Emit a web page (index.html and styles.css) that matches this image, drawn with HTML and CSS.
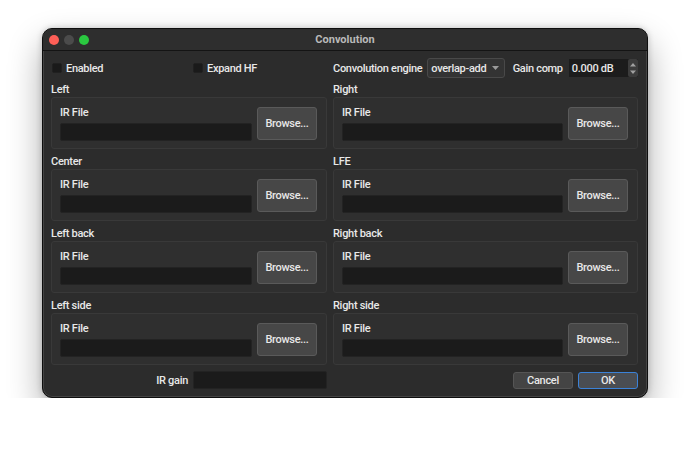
FILE: index.html
```html
<!DOCTYPE html>
<html>
<head>
<meta charset="utf-8">
<link rel="stylesheet" href="styles.css">
</head>
<body>
<div class="window">
  <div class="titlebar">
    <div class="lights">
      <span class="light red"></span>
      <span class="light gray"></span>
      <span class="light green"></span>
    </div>
    <div class="title">Convolution</div>
  </div>
  <div class="content">
    <div class="top-left">
      <label class="check enabled"><span class="box"></span>Enabled</label>
      <label class="check"><span class="box"></span>Expand HF</label>
    </div>
    <div class="top-right">
      <span class="lbl">Convolution engine</span>
      <div class="combo">
        <span>overlap-add</span>
        <svg class="caret" width="7" height="4" viewBox="0 0 7 4"><path d="M0 0 H7 L3.5 4 Z" fill="#9a9a9a"/></svg>
      </div>
      <span class="lbl gain">Gain comp</span>
      <div class="spin">
        <span class="spin-val">0.000 dB</span>
        <div class="spin-btns">
          <svg width="6" height="13" viewBox="0 0 6 13"><path d="M0 4.5 L3 1 L6 4.5 Z M0 8.5 L3 12 L6 8.5 Z" fill="#a0a0a0"/></svg>
        </div>
      </div>
    </div>

    <div class="section">
      <div class="sec-label">Left</div>
      <div class="group"><div class="ir">IR File</div><div class="field"></div><button class="btn browse">Browse...</button></div>
    </div>
    <div class="section">
      <div class="sec-label">Right</div>
      <div class="group"><div class="ir">IR File</div><div class="field"></div><button class="btn browse">Browse...</button></div>
    </div>
    <div class="section">
      <div class="sec-label">Center</div>
      <div class="group"><div class="ir">IR File</div><div class="field"></div><button class="btn browse">Browse...</button></div>
    </div>
    <div class="section">
      <div class="sec-label">LFE</div>
      <div class="group"><div class="ir">IR File</div><div class="field"></div><button class="btn browse">Browse...</button></div>
    </div>
    <div class="section">
      <div class="sec-label">Left back</div>
      <div class="group"><div class="ir">IR File</div><div class="field"></div><button class="btn browse">Browse...</button></div>
    </div>
    <div class="section">
      <div class="sec-label">Right back</div>
      <div class="group"><div class="ir">IR File</div><div class="field"></div><button class="btn browse">Browse...</button></div>
    </div>
    <div class="section">
      <div class="sec-label">Left side</div>
      <div class="group"><div class="ir">IR File</div><div class="field"></div><button class="btn browse">Browse...</button></div>
    </div>
    <div class="section">
      <div class="sec-label">Right side</div>
      <div class="group"><div class="ir">IR File</div><div class="field"></div><button class="btn browse">Browse...</button></div>
    </div>

    <div class="bottom-left">
      <span class="lbl">IR gain</span>
      <div class="field gain-field"></div>
    </div>
    <div class="bottom-right">
      <button class="btn small">Cancel</button>
      <button class="btn small default">OK</button>
    </div>
  </div>
</div>
</body>
</html>
```

FILE: styles.css
```css
* { box-sizing: border-box; }

html, body {
  margin: 0;
  padding: 0;
  background: #ffffff;
}

body {
  padding: 28px 0 0 42px;
  font-family: Roboto, "Liberation Sans", sans-serif;
  font-size: 11px;
  font-weight: 500;
  letter-spacing: -0.3px;
  color: #e8e8e8;
}

.window {
  width: 606px;
  height: 370px;
  background: #2c2c2c;
  border: 1px solid #0e0e0e;
  border-radius: 10px;
  box-shadow: 0 16px 34px rgba(0, 0, 0, 0.33), 0 0 6px rgba(0, 0, 0, 0.2), inset 0 0 0 1px #444;
  overflow: hidden;
  display: flex;
  flex-direction: column;
}

.titlebar {
  height: 22px;
  flex: none;
  display: flex;
  align-items: center;
  position: relative;
  background: #2e2e2e;
  border-bottom: 1px solid #141414;
}

.lights {
  display: flex;
  gap: 5px;
  padding-left: 6px;
  padding-top: 1px;
}

.light {
  width: 10px;
  height: 10px;
  border-radius: 50%;
  display: block;
}
.red { background: #fe5f57; }
.gray { background: #4b4b4b; }
.green { background: #2ac840; }

.title {
  position: absolute;
  left: 0;
  right: 0;
  text-align: center;
  font-weight: 700;
  letter-spacing: 0;
  color: #b9b9b9;
  font-size: 11px;
  top: 4px;
}

.content {
  display: grid;
  grid-template-columns: 276px 305px;
  column-gap: 6px;
  row-gap: 6px;
  padding: 6px 9px 0 8px;
}

.top-left, .top-right {
  height: 22px;
  display: flex;
  align-items: center;
  margin-bottom: -2px;
  white-space: nowrap;
}

.check {
  display: flex;
  align-items: center;
  gap: 4px;
}
.check.enabled { width: 142px; padding-left: 1px; }

.box {
  width: 10px;
  height: 10px;
  background: #1a1a1a;
  border: 1px solid #202020;
  border-radius: 2px;
  display: block;
}

.lbl { white-space: nowrap; }

.combo {
  width: 79px;
  height: 20px;
  margin-left: 5px;
  padding: 0 5px 0 3px;
  display: flex;
  align-items: center;
  justify-content: space-between;
  background: #333333;
  border: 1px solid #494949;
  border-radius: 3px;
  white-space: nowrap;
}

.gain { margin-left: 8px; }

.spin {
  margin-left: 6px;
  width: 71px;
  height: 18px;
  display: flex;
  align-items: stretch;
  background: #1c1c1c;
}
.spin-val {
  flex: 1;
  display: flex;
  align-items: center;
  padding-left: 3px;
}
.spin-btns {
  width: 10px;
  display: flex;
  align-items: center;
  justify-content: center;
  background: #3c3c3c;
  border-radius: 2px;
}

.section {
  display: flex;
  flex-direction: column;
}

.sec-label {
  height: 14px;
  line-height: 14px;
}

.group {
  height: 52px;
  background: #2f2f2f;
  border: 1px solid #393939;
  border-radius: 3px;
  padding: 8px 9px 7px 8px;
  display: grid;
  grid-template-columns: 1fr 60px;
  grid-template-rows: 14px 18px;
  column-gap: 5px;
  row-gap: 3px;
}

.ir { line-height: 14px; }

.field {
  background: #1b1b1b;
  border: 1px solid #232323;
  border-radius: 2px;
}

.btn {
  font-family: inherit;
  font-size: 11px;
  font-weight: 500;
  letter-spacing: -0.3px;
  color: #e8e8e8;
  background: #474747;
  border: 1px solid #5a5a5a;
  border-radius: 3px;
  padding: 0;
}

.browse {
  grid-column: 2;
  grid-row: 1 / span 2;
  height: 33px;
  margin-top: 1px;
  align-self: start;
}

.bottom-left {
  display: flex;
  justify-content: flex-end;
  align-items: center;
  gap: 5px;
  height: 18px;
}
.gain-field {
  width: 134px;
  height: 18px;
}

.bottom-right {
  display: flex;
  justify-content: flex-end;
  align-items: center;
  gap: 5px;
  height: 18px;
}

.small {
  width: 60px;
  height: 17px;
  background: #444;
  border-color: #555;
}
.default {
  background: #4a4d52;
  border-color: #3b82d8;
}
```
